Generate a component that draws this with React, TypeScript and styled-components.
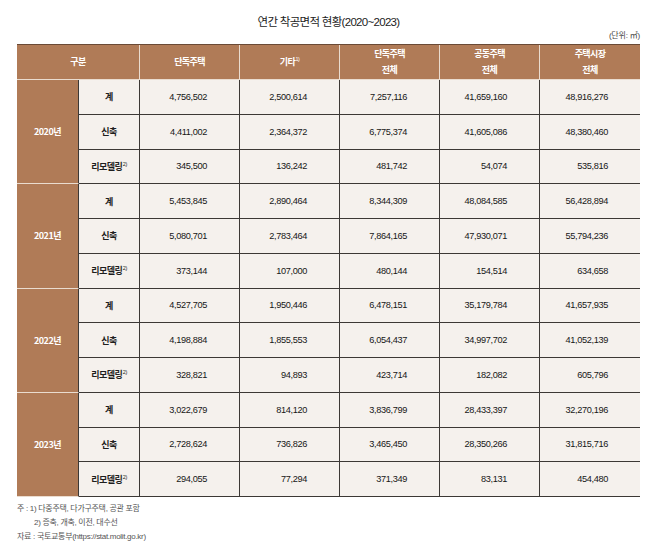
import React from "react";
import styled, { createGlobalStyle } from "styled-components";

const Global = createGlobalStyle`
  html, body { margin: 0; padding: 0; background: #ffffff; }
  body { font-family: "Liberation Sans", "Noto Sans CJK KR", sans-serif; }
`;

const BROWN = "#b07b57";
const BEIGE = "#f5f1ed";
const DARK = "#3c3835";
const LIGHT = "#eadccf";

const Page = styled.div`
  padding: 14px 0 0 17px;
  width: 623px;
`;

const Title = styled.h1`
  margin: 0;
  height: 16px;
  line-height: 16px;
  font-size: 11.5px;
  font-weight: 400;
  letter-spacing: -0.7px;
  color: #222;
  text-align: center;
  font-family: "Liberation Sans", "Noto Sans CJK KR", sans-serif;
`;

const Unit = styled.div`
  margin-top: 1px;
  height: 10px;
  line-height: 10px;
  font-size: 8px;
  color: #444;
  text-align: right;
  letter-spacing: -0.2px;
`;

const Table = styled.table`
  margin-top: 3px;
  width: 623px;
  table-layout: fixed;
  border-collapse: separate;
  border-spacing: 0;
  border-top: 1px solid #6a4a36;
`;

const Col = styled.col<{ $w: number }>`
  width: ${(p) => p.$w}px;
`;

const HeadRow = styled.tr`
  height: 35px;
`;

const BodyRow = styled.tr`
  height: 34.75px;
`;

const Th = styled.th<{ $last?: boolean }>`
  padding: 0;
  background: ${BROWN};
  color: #ffffff;
  font-family: "Noto Sans CJK KR", sans-serif;
  font-size: 9px;
  font-weight: 700;
  letter-spacing: -0.6px;
  line-height: 16px;
  text-align: center;
  vertical-align: middle;
  border-right: ${(p) => (p.$last ? "none" : `1px solid ${LIGHT}`)};
  border-bottom: 1px solid ${LIGHT};
`;

const YearCell = styled.td`
  padding: 0;
  background: ${BROWN};
  color: #ffffff;
  font-family: "Noto Sans CJK KR", sans-serif;
  font-size: 9px;
  font-weight: 700;
  letter-spacing: -0.5px;
  text-align: center;
  vertical-align: middle;
  border-right: 1px solid ${DARK};
  border-bottom: 1px solid ${LIGHT};
`;

const LabelCell = styled.td`
  padding: 0;
  background: ${BEIGE};
  color: #1e1e1e;
  font-family: "Noto Sans CJK KR", sans-serif;
  font-size: 9px;
  font-weight: 700;
  letter-spacing: -0.5px;
  text-align: center;
  vertical-align: middle;
  border-right: 1px solid ${DARK};
  border-bottom: 1px solid ${DARK};
`;

const NumCell = styled.td<{ $last?: boolean }>`
  padding: 0 32px 0 0;
  background: ${BEIGE};
  color: #161616;
  font-family: "Liberation Sans", sans-serif;
  font-size: 9.2px;
  letter-spacing: -0.35px;
  text-align: right;
  vertical-align: middle;
  border-right: ${(p) => (p.$last ? "none" : `1px solid ${DARK}`)};
  border-bottom: 1px solid ${DARK};
`;

const Sup = styled.sup`
  font-size: 5.5px;
  font-weight: 400;
  vertical-align: 4px;
  line-height: 0;
  margin-left: 0.5px;
  font-family: "Liberation Sans", sans-serif;
`;

const Notes = styled.div`
  margin-top: 6px;
  display: flex;
  flex-direction: column;
  gap: 3px;
  font-size: 8px;
  line-height: 11px;
  color: #555;
  letter-spacing: -0.3px;
  font-family: "Liberation Sans", "Noto Sans CJK KR", sans-serif;
`;

const NoteLine = styled.div<{ $indent?: boolean }>`
  padding-left: ${(p) => (p.$indent ? "17px" : "0")};
`;

type Row = { label: string; sup?: boolean; values: string[] };
type Group = { year: string; rows: Row[] };

const data: Group[] = [
  {
    year: "2020년",
    rows: [
      { label: "계", values: ["4,756,502", "2,500,614", "7,257,116", "41,659,160", "48,916,276"] },
      { label: "신축", values: ["4,411,002", "2,364,372", "6,775,374", "41,605,086", "48,380,460"] },
      { label: "리모델링", sup: true, values: ["345,500", "136,242", "481,742", "54,074", "535,816"] },
    ],
  },
  {
    year: "2021년",
    rows: [
      { label: "계", values: ["5,453,845", "2,890,464", "8,344,309", "48,084,585", "56,428,894"] },
      { label: "신축", values: ["5,080,701", "2,783,464", "7,864,165", "47,930,071", "55,794,236"] },
      { label: "리모델링", sup: true, values: ["373,144", "107,000", "480,144", "154,514", "634,658"] },
    ],
  },
  {
    year: "2022년",
    rows: [
      { label: "계", values: ["4,527,705", "1,950,446", "6,478,151", "35,179,784", "41,657,935"] },
      { label: "신축", values: ["4,198,884", "1,855,553", "6,054,437", "34,997,702", "41,052,139"] },
      { label: "리모델링", sup: true, values: ["328,821", "94,893", "423,714", "182,082", "605,796"] },
    ],
  },
  {
    year: "2023년",
    rows: [
      { label: "계", values: ["3,022,679", "814,120", "3,836,799", "28,433,397", "32,270,196"] },
      { label: "신축", values: ["2,728,624", "736,826", "3,465,450", "28,350,266", "31,815,716"] },
      { label: "리모델링", sup: true, values: ["294,055", "77,294", "371,349", "83,131", "454,480"] },
    ],
  },
];

export default function App() {
  return (
    <>
      <Global />
      <Page>
        <Title>연간 착공면적 현황(2020~2023)</Title>
        <Unit>(단위: ㎡)</Unit>
        <Table>
          <colgroup>
            <Col $w={62} />
            <Col $w={61} />
            <Col $w={100} />
            <Col $w={100} />
            <Col $w={100} />
            <Col $w={100} />
            <Col $w={100} />
          </colgroup>
          <thead>
            <HeadRow>
              <Th colSpan={2}>구분</Th>
              <Th>단독주택</Th>
              <Th>
                기타<Sup>1)</Sup>
              </Th>
              <Th>
                단독주택
                <br />
                전체
              </Th>
              <Th>
                공동주택
                <br />
                전체
              </Th>
              <Th $last>
                주택시장
                <br />
                전체
              </Th>
            </HeadRow>
          </thead>
          <tbody>
            {data.map((g) =>
              g.rows.map((r, i) => (
                <BodyRow key={g.year + r.label}>
                  {i === 0 && <YearCell rowSpan={3}>{g.year}</YearCell>}
                  <LabelCell>
                    {r.label}
                    {r.sup && <Sup>2)</Sup>}
                  </LabelCell>
                  {r.values.map((v, j) => (
                    <NumCell key={j} $last={j === r.values.length - 1}>
                      {v}
                    </NumCell>
                  ))}
                </BodyRow>
              ))
            )}
          </tbody>
        </Table>
        <Notes>
          <NoteLine>주 : 1) 다중주택, 다가구주택, 공관 포함</NoteLine>
          <NoteLine $indent>2) 증축, 개축, 이전, 대수선</NoteLine>
          <NoteLine>자료 : 국토교통부(https://stat.molit.go.kr)</NoteLine>
        </Notes>
      </Page>
    </>
  );
}
